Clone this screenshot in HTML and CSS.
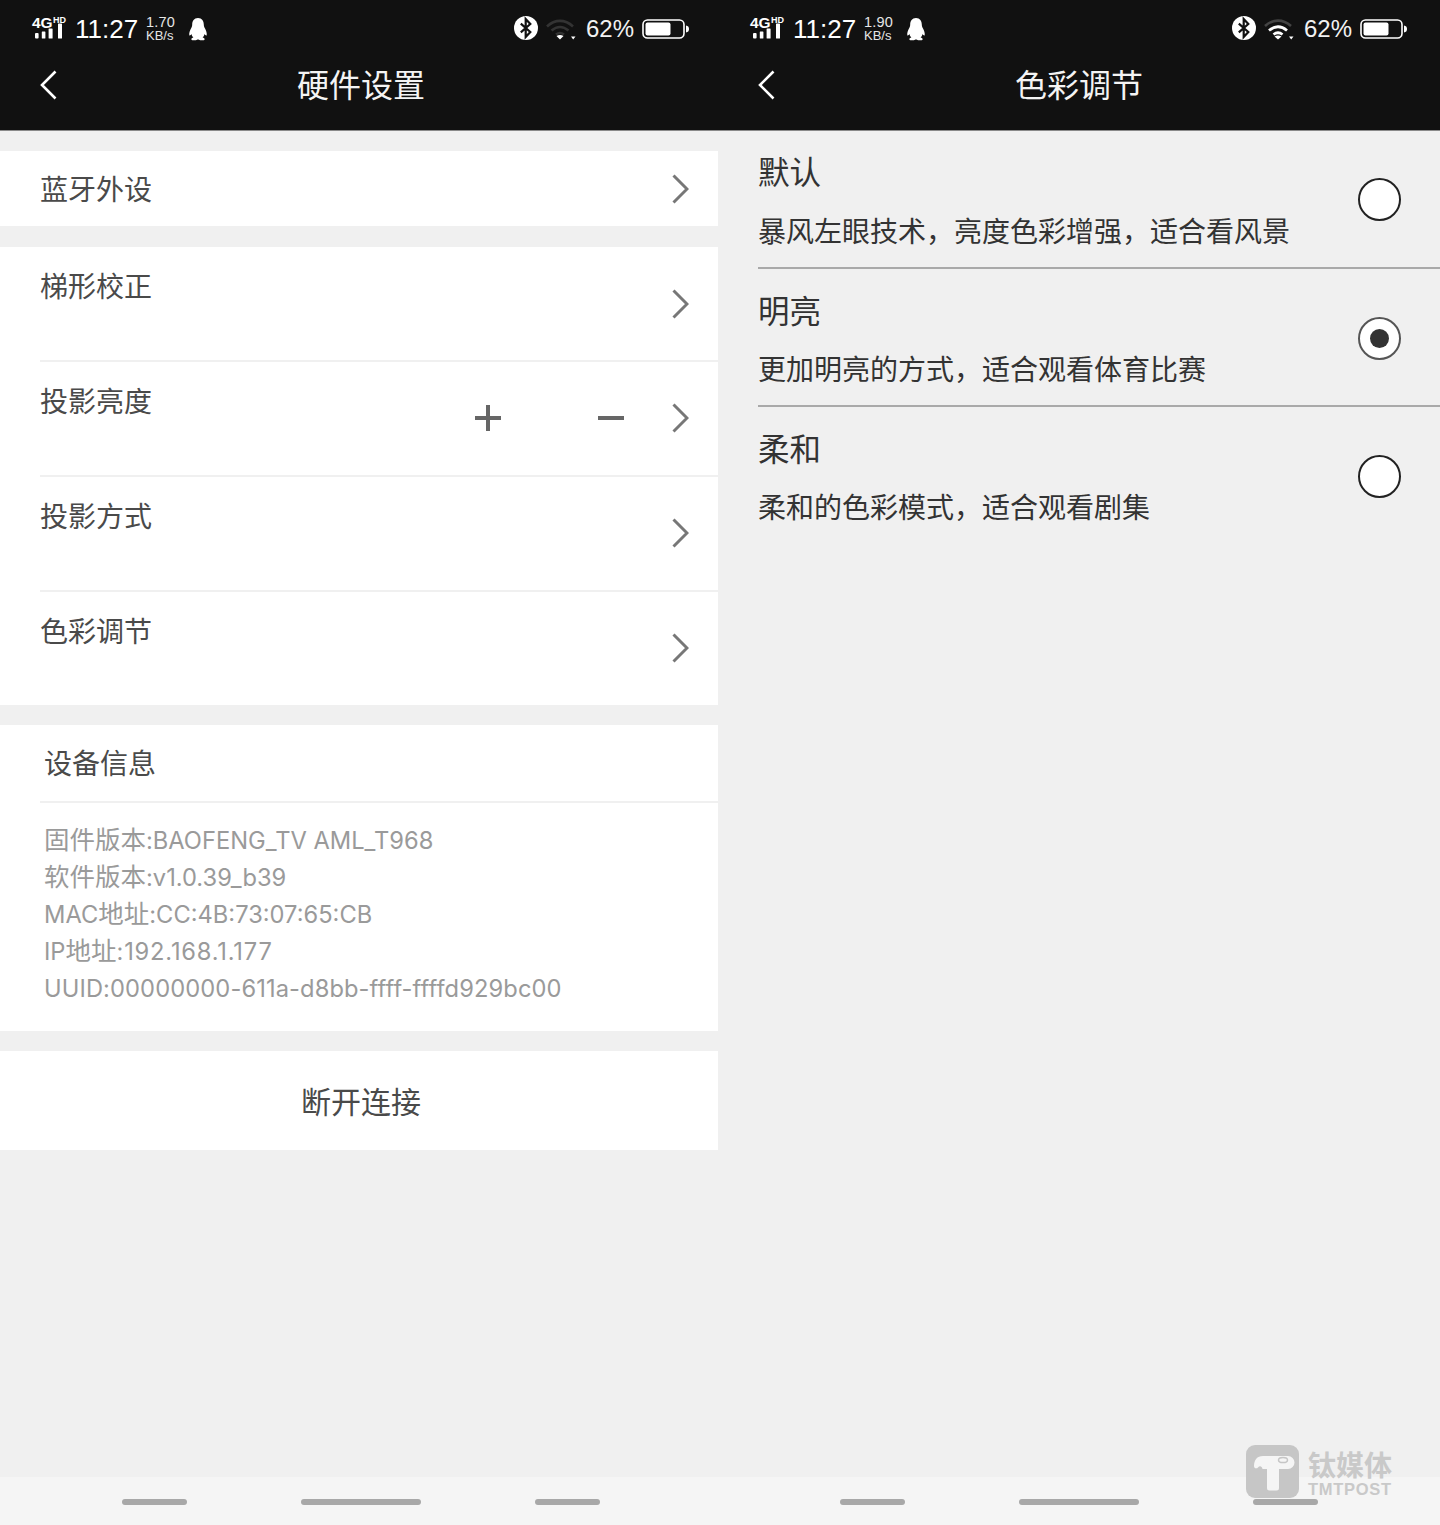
FILE: index.html
```html
<!DOCTYPE html>
<html lang="zh">
<head>
<meta charset="utf-8">
<title>硬件设置</title>
<link rel="stylesheet" href="styles.css">
</head>
<body>
<svg class="defs" width="0" height="0" aria-hidden="true">
  <symbol id="bars" viewBox="0 0 36 24">
    <rect x="3" y="17" width="3.600" height="5.500" rx="1"/>
    <rect x="9.800" y="15.500" width="3.600" height="7" rx=".6"/>
    <rect x="16.600" y="12.500" width="4" height="10" rx=".6"/>
    <rect x="26" y="7.500" width="4" height="15" rx=".6"/>
  </symbol>
  <symbol id="qq" viewBox="0 0 20 24">
    <path d="M10 1c-4 0-5.800 3-5.800 6.500 0 1.500-.4 2.500-1.200 4C2 13.500.9 16 1.300 18.200c.6.800 1.700-.4 2.200-1.200.2 1.400.9 2.600 1.900 3.500-1.200.4-2.300 1-2 2 .4 1 3 1 4.400.7 1-.2 1.500-.7 2.200-.7s1.200.5 2.200.7c1.400.3 4 .3 4.400-.7.300-1-.8-1.600-2-2 1-.9 1.700-2.100 1.900-3.500.5.800 1.600 2 2.200 1.200.4-2.200-.7-4.700-1.700-6.700-.8-1.500-1.200-2.500-1.200-4C15.800 4 14 1 10 1z"/>
  </symbol>
  <symbol id="bt" viewBox="0 0 24 24">
    <circle cx="12" cy="12" r="12" fill="#fff"/>
    <path d="M6.800 7.700 16.300 16l-4.600 5V3l4.600 5-9.500 8.300" fill="none" stroke="#111" stroke-width="2.200"/>
  </symbol>
  <symbol id="batt" viewBox="0 0 47 20">
    <rect x="1" y="1" width="41" height="18" rx="4.500" fill="none" stroke="#fff" stroke-width="1.600"/>
    <rect x="3.500" y="3.500" width="25" height="13" rx="2" fill="#fff"/>
    <path d="M44 6.500c2 .3 3 1.500 3 3.500s-1 3.200-3 3.500z" fill="#fff"/>
  </symbol>
  <symbol id="chev" viewBox="0 0 17 30">
    <path d="M1.500 1.500 15 15 1.500 28.500" fill="none" stroke="#777" stroke-width="3"/>
  </symbol>
  <symbol id="back" viewBox="0 0 17 30">
    <path d="M15.500 1.500 2 15l13.500 13.500" fill="none" stroke="#fff" stroke-width="2.600"/>
  </symbol>
</svg>

<main class="screen">
  <section class="panel panel-left">
    <header class="top">
      <div class="status">
        <svg class="ic-signal" viewBox="0 0 36 24"><text x="0" y="11.500" class="sig-4g">4G</text><text x="21" y="6.500" class="sig-hd">HD</text><use href="#bars"/></svg>
        <span class="time">11:27</span>
        <span class="speed"><b>1.70</b><i>KB/s</i></span>
        <svg class="ic-qq"><use href="#qq"/></svg>
        <span class="spacer"></span>
        <svg class="ic-bt"><use href="#bt"/></svg>
        <svg class="ic-wifi" viewBox="0 0 32 22">
          <path d="M2 8.500C10 1 20 1 28 8.500M6.500 12.500c5.500-4.500 11.500-4.500 17 0M11 16.500c3-2.300 5-2.300 8 0" fill="none" stroke="#333" stroke-width="2.600"/>
          <path d="M11.500 18c2.300-1.500 4.700-1.500 7 0L15 21.500zM26 18.500h4.500L28.200 21.500z" fill="#fff"/>
        </svg>
        <span class="batt-text">62%</span>
        <svg class="ic-batt"><use href="#batt"/></svg>
      </div>
      <div class="nav">
        <svg class="ic-back"><use href="#back"/></svg>
        <h1 class="nav-title">硬件设置</h1>
      </div>
    </header>

    <div class="group">
      <div class="row row-short"><span class="label">蓝牙外设</span><svg class="ic-chev"><use href="#chev"/></svg></div>
    </div>

    <div class="group group-main">
      <div class="row row-tall row-first"><span class="label">梯形校正</span><svg class="ic-chev"><use href="#chev"/></svg></div>
      <div class="row row-tall">
        <span class="label">投影亮度</span>
        <span class="step step-plus"></span>
        <span class="step step-minus"></span>
        <svg class="ic-chev"><use href="#chev"/></svg>
      </div>
      <div class="row row-tall"><span class="label">投影方式</span><svg class="ic-chev"><use href="#chev"/></svg></div>
      <div class="row row-tall"><span class="label">色彩调节</span><svg class="ic-chev"><use href="#chev"/></svg></div>
    </div>

    <div class="group info">
      <div class="info-head"><span class="info-title">设备信息</span></div>
      <div class="info-body">
        <p>固件版本<span class="lat">:BAOFENG_TV AML_T968</span></p>
        <p>软件版本<span class="lat">:v1.0.39_b39</span></p>
        <p><span class="lat">MAC</span>地址<span class="lat">:CC:4B:73:07:65:CB</span></p>
        <p><span class="lat">IP</span>地址<span class="lat lat-ip">:192.168.1.177</span></p>
        <p><span class="lat lat-id">UUID:00000000-611a-d8bb-ffff-ffffd929bc00</span></p>
      </div>
    </div>

    <div class="group disconnect"><span>断开连接</span></div>

    <footer class="softkeys"><span class="key"></span><span class="key key-wide"></span><span class="key"></span></footer>
  </section>

  <section class="panel panel-right">
    <header class="top">
      <div class="status">
        <svg class="ic-signal" viewBox="0 0 36 24"><text x="0" y="11.500" class="sig-4g">4G</text><text x="21" y="6.500" class="sig-hd">HD</text><use href="#bars"/></svg>
        <span class="time">11:27</span>
        <span class="speed"><b>1.90</b><i>KB/s</i></span>
        <svg class="ic-qq"><use href="#qq"/></svg>
        <span class="spacer"></span>
        <svg class="ic-bt"><use href="#bt"/></svg>
        <svg class="ic-wifi" viewBox="0 0 32 22">
          <path d="M2 8C10 .8 20 .8 28 8" fill="none" stroke="#444" stroke-width="2.600"/>
          <path d="M6 12.500c5.800-4.800 12.200-4.800 18 0M10.500 16.500c3.200-2.500 5.800-2.500 9 0" fill="none" stroke="#fff" stroke-width="2.800"/>
          <path d="M11.500 18.500c2.300-1.500 4.700-1.500 7 0L15 21.500zM26 18.500h4.500L28.200 21.500z" fill="#fff"/>
        </svg>
        <span class="batt-text">62%</span>
        <svg class="ic-batt"><use href="#batt"/></svg>
      </div>
      <div class="nav">
        <svg class="ic-back"><use href="#back"/></svg>
        <h1 class="nav-title">色彩调节</h1>
      </div>
    </header>

    <div class="options">
      <div class="option">
        <div class="opt-text"><h2>默认</h2><p>暴风左眼技术，亮度色彩增强，适合看风景</p></div>
        <span class="radio"></span>
      </div>
      <div class="option">
        <div class="opt-text"><h2>明亮</h2><p>更加明亮的方式，适合观看体育比赛</p></div>
        <span class="radio radio-on"></span>
      </div>
      <div class="option option-last">
        <div class="opt-text"><h2>柔和</h2><p>柔和的色彩模式，适合观看剧集</p></div>
        <span class="radio"></span>
      </div>
    </div>

    <footer class="softkeys"><span class="key"></span><span class="key key-wide"></span><span class="key"></span></footer>

    <div class="watermark">
      <svg class="wm-logo" viewBox="0 0 53 53">
        <rect width="53" height="53" rx="9" fill="#c6c6c6"/>
        <path d="M8 21c0-6 3-10 9-10h25a6.500 6.500 0 0 1 0 13H33v19a2.500 2.500 0 0 1-2.500 2.500h-7A2.500 2.500 0 0 1 21 43V24h-4.500c-.5-3-3-3.500-4.500-1.500C10.500 24 8 23.500 8 21z" fill="#f5f5f5"/>
        <ellipse cx="37" cy="15" rx="4.500" ry="2.600" fill="#f5f5f5" stroke="#c6c6c6" stroke-width="1.500"/>
      </svg>
      <div class="wm-text"><span class="wm-cn">钛媒体</span><span class="wm-en">TMTPOST</span></div>
    </div>
  </section>
</main>
</body>
</html>
```
FILE: styles.css
```css
* { box-sizing: border-box; margin: 0; padding: 0; }
html, body { width: 1440px; height: 1525px; overflow: hidden; }
body { background: #f0f0f0; font-family: "Liberation Sans", "Noto Sans CJK SC", sans-serif; color: #333; }
.defs { position: absolute; }
.screen { display: flex; height: 1525px; }
.panel { position: relative; display: flex; flex-direction: column; height: 100%; background: #f0f0f0; }
.panel-left { width: 718px; }
.panel-right { width: 722px; }

/* header */
.top { height: 131px; flex: none; background: #111; border-bottom: 1px solid #8a8a8a; color: #fff; }
.status { height: 57px; display: flex; align-items: center; width: 718px; padding: 0 29px 0 32px; }
.ic-signal { width: 36px; height: 24px; flex: none; fill: #fff; margin-top: -2px; overflow: visible; }
.sig-4g { font: bold 15.500px "Liberation Sans", sans-serif; }
.sig-hd { font: bold 9px "Liberation Sans", sans-serif; }
.time { margin-left: 7px; font-size: 26px; line-height: 30px; width: 64px; margin-top: 1px; }
.speed { margin-left: 7px; width: 34px; display: flex; flex-direction: column; color: #e6e6e6; }
.speed b { font-weight: normal; font-size: 14.500px; line-height: 15px; letter-spacing: .2px; }
.speed i { font-style: normal; font-size: 13px; line-height: 12px; }
.ic-qq { width: 20px; height: 24px; fill: #fff; margin-left: 8px; flex: none; }
.spacer { flex: 1; }
.ic-bt { width: 24px; height: 24px; flex: none; margin-top: -1px; }
.ic-wifi { width: 32px; height: 22px; flex: none; margin-left: 7px; }
.batt-text { margin-left: 9px; font-size: 24px; line-height: 28px; width: 48px; color: #f2f2f2; }
.ic-batt { width: 47px; height: 20px; flex: none; margin-left: 8px; }
.nav { position: relative; height: 73px; display: flex; align-items: center; justify-content: center; padding-left: 4px; width: 718px; }
.ic-back { position: absolute; left: 40px; top: 13px; width: 17px; height: 30px; }
.nav-title { font-size: 32px; font-weight: normal; line-height: 56px; margin-top: -15px; color: #f4f4f4; }

/* left panel groups */
.group { background: #fff; margin-top: 20px; flex: none; }
.group-main { margin-top: 21px; }
.row { display: flex; align-items: center; margin-left: 40px; padding-right: 29px; }
.row-short { height: 75px; }
.row-short .label { padding-top: 4px; }
.row-tall { height: 115px; border-top: 2px solid #f0f0f0; padding-bottom: 2px; }
.row-first { height: 113px; border-top: 0; padding-bottom: 0; }
.label { font-size: 28px; line-height: 40px; color: #4a4a4a; flex: 1; }
.row-tall .label { align-self: flex-start; padding-top: 21px; line-height: 40px; }
.ic-chev { width: 17px; height: 30px; flex: none; }
.step { position: relative; width: 26px; height: 26px; flex: none; display: block; }
.step::before { content: ""; position: absolute; left: 0; right: 0; top: 11px; height: 4px; background: #666; }
.step-plus::after { content: ""; position: absolute; top: 0; bottom: 0; left: 11px; width: 4px; background: #666; }
.step-plus { margin-right: 97px; }
.step-minus { margin-right: 48px; }

.info { height: 306px; }
.info-head { margin-left: 40px; height: 78px; border-bottom: 2px solid #f0f0f0; display: flex; align-items: center; padding: 4px 0 0 4px; }
.info-title { font-size: 28px; line-height: 40px; color: #4a4a4a; }
.info-body { padding: 19px 0 0 44px; }
.info-body p { font-size: 25.500px; line-height: 37px; color: #9a9a9a; white-space: nowrap; }
.lat { font-family: Inter, "Liberation Sans", sans-serif; font-size: 23.700px; }
.lat-ip { letter-spacing: .8px; }
.lat-id { letter-spacing: .1px; }

.disconnect { height: 99px; display: flex; align-items: center; justify-content: center; padding: 0 0 2px 4px; font-size: 30px; color: #4a4a4a; }

/* soft keys */
.softkeys { margin-top: auto; height: 48px; flex: none; background: #f5f5f5; display: flex; gap: 114px; padding: 22px 0 0 122px; }
.key { width: 65px; height: 6px; border-radius: 3px; background: #a8a8a8; }
.key-wide { width: 120px; }

/* right panel */
.options { padding-left: 40px; }
.option { height: 138px; display: flex; align-items: flex-start; border-bottom: 2px solid #a9a9a9; padding-right: 39px; }
.option-last { border-bottom: 0; }
.opt-text { flex: 1; padding-top: 20px; }
.opt-text h2 { font-size: 31.500px; font-weight: normal; line-height: 44px; color: #333; }
.opt-text p { font-size: 28px; line-height: 40px; margin-top: 18px; color: #333; }
.option + .option .opt-text { padding-top: 21px; }
.option + .option .opt-text p { margin-top: 17px; }
.radio { display: flex; align-items: center; justify-content: center; width: 43px; height: 43px; margin-top: 47px; border-radius: 50%; background: #fff; border: 2px solid #222; flex: none; }
.option + .option .radio { margin-top: 48px; }
.radio-on { border-color: #555; }
.radio-on::after { content: ""; width: 19px; height: 19px; border-radius: 50%; background: #333; }

/* watermark */
.watermark { position: absolute; right: 48px; bottom: 27px; display: flex; align-items: flex-end; gap: 9px; }
.wm-logo { width: 53px; height: 53px; flex: none; }
.wm-text { display: flex; flex-direction: column; color: #c9c9c9; padding-bottom: 1px; }
.wm-cn { font-size: 28px; line-height: 30px; font-weight: bold; }
.wm-en { font-size: 16.500px; line-height: 15px; font-weight: bold; letter-spacing: .7px; }
```
